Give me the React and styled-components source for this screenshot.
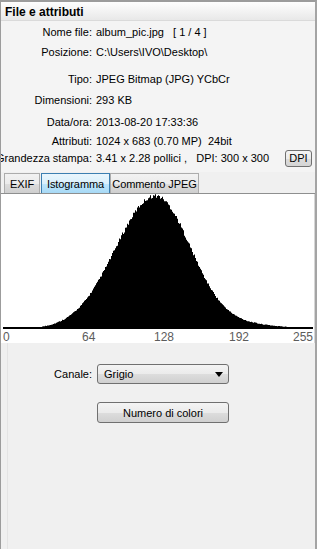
import React, {useMemo} from 'react';
import styled, {createGlobalStyle} from 'styled-components';

const GlobalStyle = createGlobalStyle`
    html, body {
        margin: 0;
        padding: 0;
        background: #f0f0f0;
        overflow: hidden;
    }
    body {
        font-family: "Liberation Sans", Arial, sans-serif;
        font-size: 11px;
        color: #000;
    }
`;

const Frame = styled.div`
    width: 317px;
    height: 549px;
    box-sizing: border-box;
    border-top: 2px solid #9c9c9c;
    border-left: 1px solid #9c9c9c;
    border-right: 2px solid #a4a4a4;
    background: #f0f0f0;
    display: flex;
    flex-direction: column;
    overflow: hidden;
`;

const Header = styled.div`
    height: 19px;
    flex-shrink: 0;
    box-sizing: border-box;
    padding: 2px 0 0 4px;
    display: flex;
    align-items: center;
    font-size: 12px;
    font-weight: bold;
    background: linear-gradient(#fefefe, #e8e8e8);
    border-bottom: 1px solid #dadada;
`;

const InfoPanel = styled.div`
    background: #f4f4f4;
    padding-bottom: 6px;
    display: flex;
    flex-direction: column;
`;

const Row = styled.div`
    display: flex;
    align-items: center;
    height: 16px;
    margin-top: ${p => p.$mt}px;
    white-space: nowrap;
`;

const Label = styled.div`
    width: 91px;
    flex-shrink: 0;
    display: flex;
    justify-content: flex-end;
    white-space: nowrap;
`;

const Value = styled.div`
    padding-left: 4px;
    white-space: pre;
`;

const SmallButton = styled.button`
    margin-left: auto;
    margin-right: 3px;
    width: 27px;
    height: 17px;
    padding: 0;
    font-family: inherit;
    font-size: 11px;
    border: 1px solid #707070;
    border-radius: 3px;
    background: linear-gradient(#f4f4f4 0%, #ebebeb 50%, #dcdcdc 51%, #d4d4d4 100%);
`;

const TabStrip = styled.div`
    display: flex;
    align-items: flex-end;
    height: 21px;
    padding-left: 3px;
    gap: 1px;
    border-bottom: 1px solid #8e8f8f;
`;

const Tab = styled.div`
    width: ${p => p.$w}px;
    height: 20px;
    box-sizing: border-box;
    display: flex;
    align-items: center;
    justify-content: center;
    letter-spacing: -0.1px;
    border: 1px solid ${p => (p.$active ? '#3c7fb1' : '#acacac')};
    border-bottom: none;
    margin-right: ${p => (p.$active ? '-1px' : '0')};
    background: ${p =>
        p.$active
            ? 'linear-gradient(#eaf6fd 0%, #d9f0fc 50%, #bee6fd 51%, #a7d9f5 100%)'
            : 'linear-gradient(#f2f2f2 0%, #ebebeb 50%, #dddddd 51%, #cfcfcf 100%)'};
`;

const HistPanel = styled.div`
    background: #fff;
    height: 149px;
    flex-shrink: 0;
    border-right: 1px solid #d6d6d6;
`;

const Controls = styled.div`
    flex: 1;
    margin-left: 6px;
    border-left: 1px solid #e4e4e4;
    padding-top: 21px;
    display: flex;
    flex-direction: column;
    gap: 18px;
`;

const ControlRow = styled.div`
    display: flex;
    align-items: center;
`;

const ControlLabel = styled.div`
    width: 84px;
    text-align: right;
    padding-right: 5px;
`;

const Select = styled.div`
    width: 132px;
    height: 20px;
    box-sizing: border-box;
    display: flex;
    align-items: center;
    justify-content: space-between;
    padding: 0 5px 0 6px;
    border: 1px solid #707070;
    border-radius: 3px;
    background: linear-gradient(#f4f4f4 0%, #ebebeb 50%, #dddddd 51%, #d0d0d0 100%);
`;

const Button = styled.button`
    margin-left: 89px;
    width: 132px;
    height: 21px;
    padding: 0;
    font-family: inherit;
    font-size: 11px;
    color: #000;
    border: 1px solid #707070;
    border-radius: 3px;
    background: linear-gradient(#f4f4f4 0%, #ebebeb 50%, #dddddd 51%, #d0d0d0 100%);
`;

const rows = [
    {label: 'Nome file:', value: 'album_pic.jpg   [ 1 / 4 ]', mt: 3},
    {label: 'Posizione:', value: 'C:\\Users\\IVO\\Desktop\\', mt: 4},
    {label: 'Tipo:', value: 'JPEG Bitmap (JPG) YCbCr', mt: 11},
    {label: 'Dimensioni:', value: '293 KB', mt: 5},
    {label: 'Data/ora:', value: '2013-08-20 17:33:36', mt: 6},
    {label: 'Attributi:', value: '1024 x 683 (0.70 MP)  24bit', mt: 3},
];

// altezza colonna (px) per ogni x dello schermo
const barHeight = (x) => {
    const d = x - 155;
    const s = d < 0 ? 40 : 35;
    let h = 133 * Math.exp(-(d * d) / (2 * s * s));
    h += 4 * Math.exp(-((x - 245) ** 2) / (2 * 35 * 35));
    const r = Math.abs(Math.sin(x * 12.9898) * 43758.5453) % 1;
    h += (r - 0.5) * Math.min(4, 0.6 + h * 0.035);
    return Math.max(2, Math.min(135, h));
};

const Histogram = () => {
    const path = useMemo(() => {
        let d = 'M2,135';
        for (let x = 3; x <= 312; x++) {
            const y = (135 - barHeight(x)).toFixed(1);
            d += ` V${y} H${x}`;
        }
        d += ' V135 Z';
        return d;
    }, []);

    const labels = [
        {t: '0', x: 2, a: 'start'},
        {t: '64', x: 81, a: 'start'},
        {t: '128', x: 153, a: 'start'},
        {t: '192', x: 228, a: 'start'},
        {t: '255', x: 312, a: 'end'},
    ];

    return (
        <svg width="313" height="149" viewBox="0 0 313 149">
            <path d={path} fill="#000" />
            {labels.map(l => (
                <text
                    key={l.t}
                    x={l.x}
                    y="147"
                    textAnchor={l.a}
                    fontFamily="Liberation Sans, Arial, sans-serif"
                    fontSize="12"
                    fill="#5c5c5c"
                >
                    {l.t}
                </text>
            ))}
        </svg>
    );
};

const App = () => {
    return (
        <>
            <GlobalStyle />
            <Frame>
                <Header>File e attributi</Header>
                <InfoPanel>
                    {rows.map(r => (
                        <Row key={r.label} $mt={r.mt}>
                            <Label>{r.label}</Label>
                            <Value>{r.value}</Value>
                        </Row>
                    ))}
                    <Row $mt={1}>
                        <Label>Grandezza stampa:</Label>
                        <Value>{'3.41 x 2.28 pollici ,   DPI: 300 x 300'}</Value>
                        <SmallButton>DPI</SmallButton>
                    </Row>
                </InfoPanel>
                <TabStrip>
                    <Tab $w={36}>EXIF</Tab>
                    <Tab $w={69} $active>Istogramma</Tab>
                    <Tab $w={89}>Commento JPEG</Tab>
                </TabStrip>
                <HistPanel>
                    <Histogram />
                </HistPanel>
                <Controls>
                    <ControlRow>
                        <ControlLabel>Canale:</ControlLabel>
                        <Select>
                            <span>Grigio</span>
                            <svg width="8" height="5" viewBox="0 0 8 5">
                                <polygon points="0,0 8,0 4,5" fill="#000" />
                            </svg>
                        </Select>
                    </ControlRow>
                    <Button>Numero di colori</Button>
                </Controls>
            </Frame>
        </>
    );
};

export default App;
